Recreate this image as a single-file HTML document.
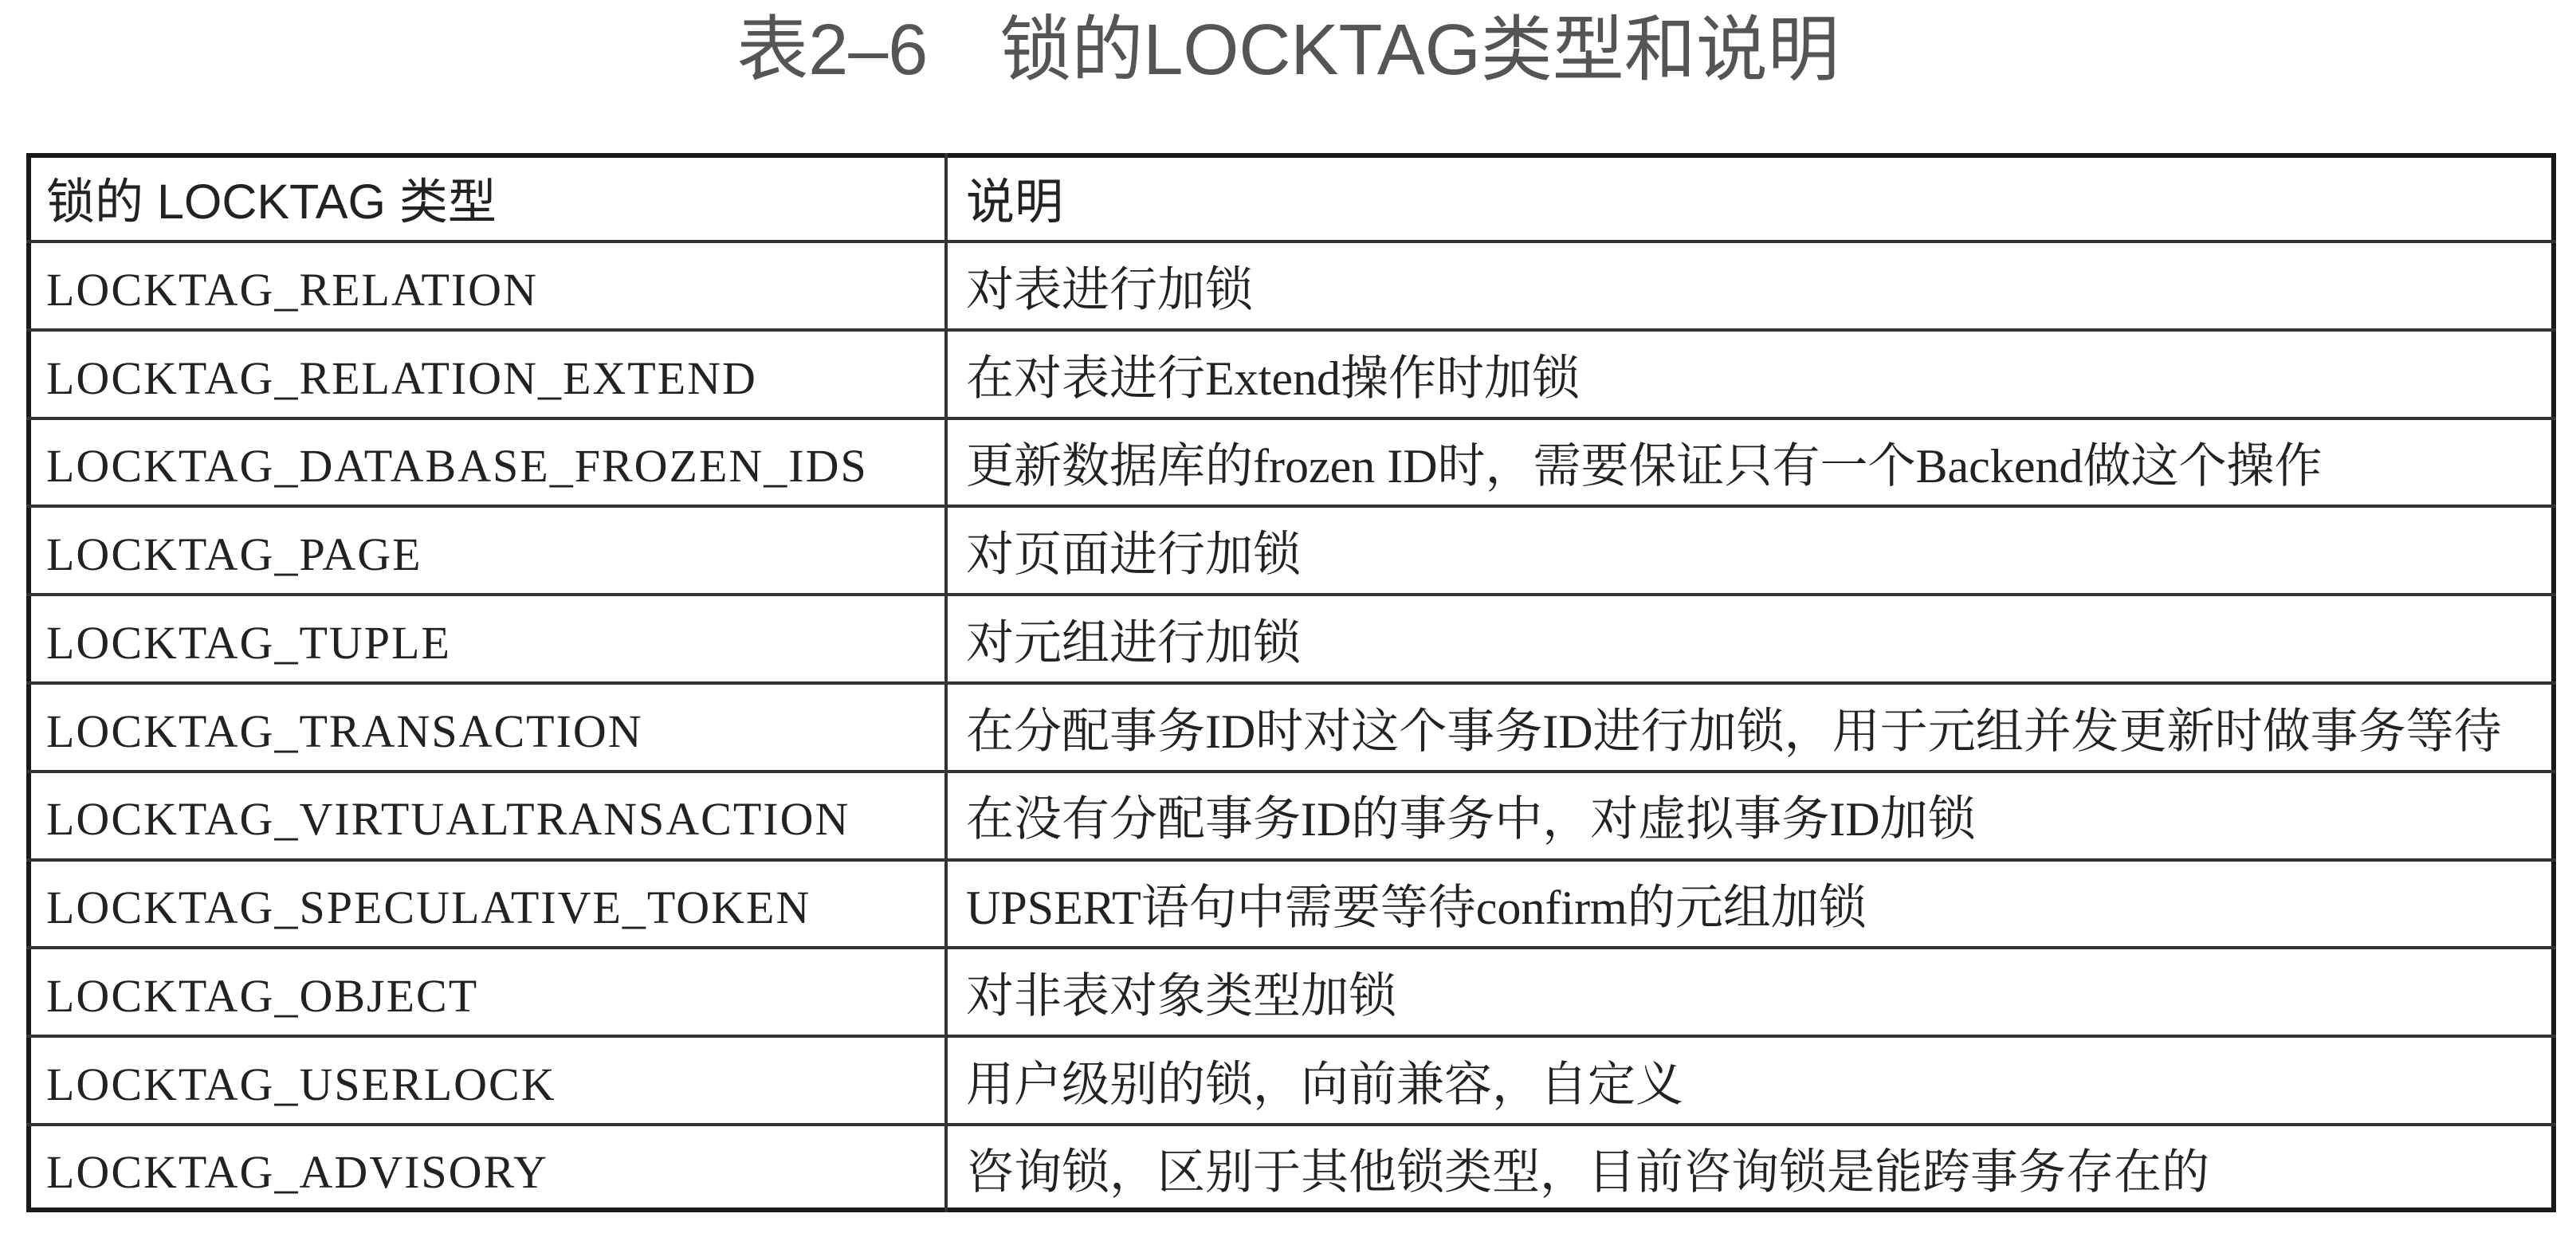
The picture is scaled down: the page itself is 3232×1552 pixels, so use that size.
<!DOCTYPE html>
<html><head><meta charset="utf-8"><style>
html,body{margin:0;padding:0;background:#fff;}
body{width:3232px;height:1552px;position:relative;overflow:hidden;}
.title{position:absolute;left:0;width:3232px;top:8px;text-align:center;font-family:"Liberation Sans","Noto Sans CJK SC",sans-serif;font-size:90px;color:#555;line-height:110px;}
.box{position:absolute;left:33px;top:192px;width:3162px;height:1317px;border:6px solid #1a1a1a;}
.vl{position:absolute;left:1185px;top:192px;width:4px;height:1329px;background:#333;}
.hl{position:absolute;left:33px;width:3174px;height:4px;background:#333;}
.c{position:absolute;height:110px;line-height:110px;white-space:nowrap;color:#222;}
.a{left:58px;font-family:"Liberation Serif","Noto Serif CJK SC",serif;font-size:58px;letter-spacing:2px;}
.b{left:1212px;font-family:"Liberation Serif","Noto Serif CJK SC",serif;font-size:60px;}
.h{font-family:"Liberation Sans","Noto Sans CJK SC",sans-serif;font-size:61px;letter-spacing:0;}
</style></head><body>
<div class="title">表2–6　锁的LOCKTAG类型和说明</div>
<div class="box"></div>
<div class="vl"></div>
<div class="hl" style="top:301px"></div>
<div class="hl" style="top:412px"></div>
<div class="hl" style="top:523px"></div>
<div class="hl" style="top:633px"></div>
<div class="hl" style="top:744px"></div>
<div class="hl" style="top:855px"></div>
<div class="hl" style="top:966px"></div>
<div class="hl" style="top:1077px"></div>
<div class="hl" style="top:1187px"></div>
<div class="hl" style="top:1298px"></div>
<div class="hl" style="top:1409px"></div>

<div class="c a h" style="top:198px">锁的 LOCKTAG 类型</div><div class="c b h" style="top:198px">说明</div>
<div class="c a" style="top:309px">LOCKTAG_RELATION</div><div class="c b" style="top:309px">对表进行加锁</div>
<div class="c a" style="top:420px">LOCKTAG_RELATION_EXTEND</div><div class="c b" style="top:420px">在对表进行Extend操作时加锁</div>
<div class="c a" style="top:530px">LOCKTAG_DATABASE_FROZEN_IDS</div><div class="c b" style="top:530px">更新数据库的frozen ID时，需要保证只有一个Backend做这个操作</div>
<div class="c a" style="top:641px">LOCKTAG_PAGE</div><div class="c b" style="top:641px">对页面进行加锁</div>
<div class="c a" style="top:752px">LOCKTAG_TUPLE</div><div class="c b" style="top:752px">对元组进行加锁</div>
<div class="c a" style="top:863px">LOCKTAG_TRANSACTION</div><div class="c b" style="top:863px">在分配事务ID时对这个事务ID进行加锁，用于元组并发更新时做事务等待</div>
<div class="c a" style="top:973px">LOCKTAG_VIRTUALTRANSACTION</div><div class="c b" style="top:973px">在没有分配事务ID的事务中，对虚拟事务ID加锁</div>
<div class="c a" style="top:1084px">LOCKTAG_SPECULATIVE_TOKEN</div><div class="c b" style="top:1084px">UPSERT语句中需要等待confirm的元组加锁</div>
<div class="c a" style="top:1195px">LOCKTAG_OBJECT</div><div class="c b" style="top:1195px">对非表对象类型加锁</div>
<div class="c a" style="top:1306px">LOCKTAG_USERLOCK</div><div class="c b" style="top:1306px">用户级别的锁，向前兼容，自定义</div>
<div class="c a" style="top:1416px">LOCKTAG_ADVISORY</div><div class="c b" style="top:1416px">咨询锁，区别于其他锁类型，目前咨询锁是能跨事务存在的</div>
</body></html>
